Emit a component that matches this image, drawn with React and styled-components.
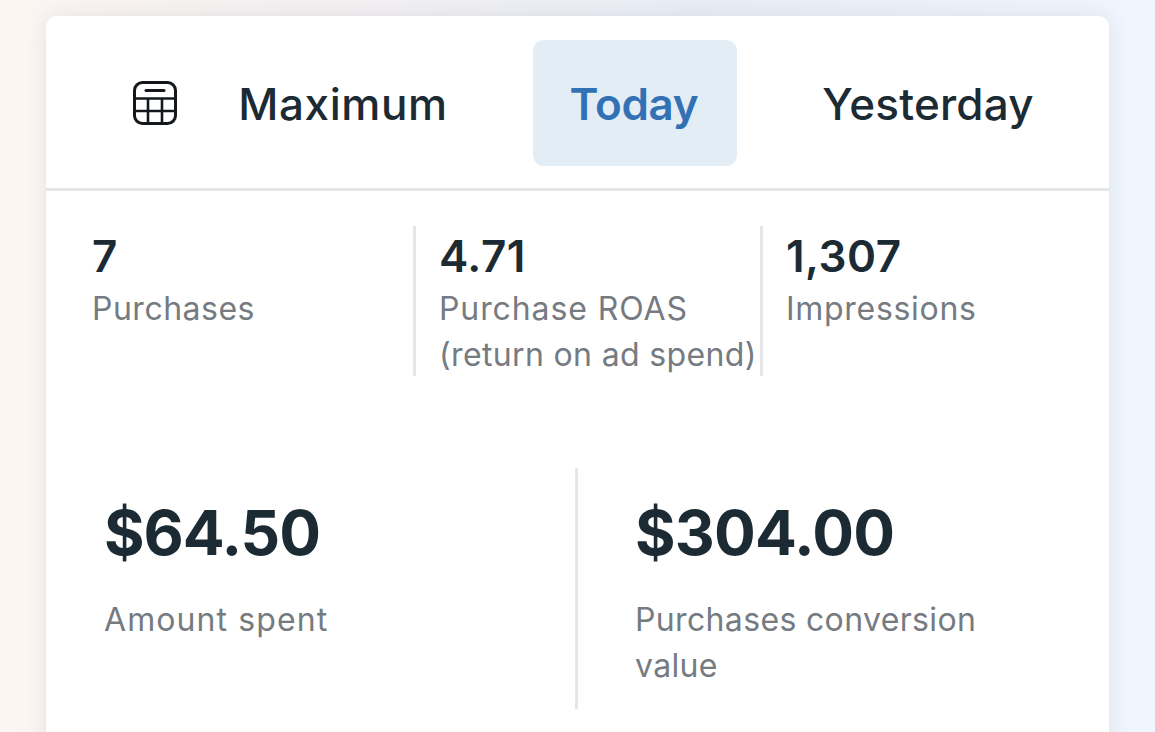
import React from "react";
import styled, { createGlobalStyle } from "styled-components";

const Global = createGlobalStyle`
  html, body { margin: 0; padding: 0; height: 100%; overflow: hidden; }
  #root { height: 100%; }
  * { box-sizing: border-box; }
`;

const Page = styled.div`
  width: 1155px;
  height: 732px;
  overflow: hidden;
  padding: 16px 46px 0;
  font-family: Inter, "Noto Sans", sans-serif;
  background: linear-gradient(90deg, #fbf6f2 0%, #f5f1f2 25%, #e9eef6 60%, #f0f6fd 100%);
`;

const Card = styled.main`
  width: 1063px;
  height: 740px;
  background: #fff;
  border-radius: 11px;
  box-shadow: 0 0 22px rgba(40, 40, 60, 0.09);
`;

const TabBar = styled.nav`
  height: 175px;
  border-bottom: 3px solid #e4e6ea;
  display: flex;
  align-items: flex-start;
  padding: 24px 0 0 87px;
`;

const IconSlot = styled.span`
  width: 44px;
  height: 126px;
  display: flex;
  align-items: center;
  color: #14181c;
`;

const Tab = styled.div`
  height: 126px;
  width: ${(p) => p.$w}px;
  margin-left: ${(p) => p.$ml}px;
  padding: 2px ${(p) => (p.$active ? 2 : 0)}px 0 0;
  display: flex;
  align-items: center;
  justify-content: center;
  border-radius: 11px;
  font-size: 44px;
  letter-spacing: ${(p) => p.$track}px;
  white-space: nowrap;
  font-weight: ${(p) => (p.$active ? 600 : 500)};
  color: ${(p) => (p.$active ? "#3371b5" : "#1c2b33")};
  background: ${(p) => (p.$active ? "#e3edf6" : "transparent")};
`;

const StatsRow = styled.section`
  display: grid;
  grid-template-columns: 347px 347px 1fr;
  margin: 35px 0 0 20px;
  height: 150px;
`;

const Stat = styled.div`
  padding-left: ${(p) => (p.$rule ? 23 : 26)}px;
  border-left: ${(p) => (p.$rule ? "3px solid #e4e6ea" : "none")};
  height: 150px;
`;

const StatValue = styled.div`
  font-size: 44px;
  font-weight: 600;
  line-height: 60px;
  letter-spacing: 0.5px;
  color: #1c2b33;
`;

const Label = styled.div`
  font-size: 32px;
  line-height: 46px;
  letter-spacing: ${(p) => p.$track}px;
  color: #757b81;
  white-space: nowrap;
`;

const TotalsRow = styled.section`
  display: grid;
  grid-template-columns: 529px 1fr;
  margin: 92px 0 0;
`;

const Total = styled.div`
  height: 241px;
  padding: 25px 0 0 ${(p) => (p.$rule ? 57 : 58)}px;
  border-left: ${(p) => (p.$rule ? "3px solid #e4e6ea" : "none")};
`;

const TotalValue = styled.div`
  font-size: 62px;
  line-height: 80px;
  font-weight: 700;
  letter-spacing: ${(p) => p.$track}px;
  color: #1c2b33;
  margin-bottom: 24px;
`;

const CalendarIcon = () => (
  <svg width="44" height="44" viewBox="0 0 44 44" fill="none" stroke="currentColor" strokeWidth="3">
    <rect x="1.5" y="1.5" width="41" height="41" rx="8" />
    <path d="M13 9.5h18" strokeLinecap="round" />
    <path d="M1.5 17.5h41M1.5 30h41M15 17.5v25M29 17.5v25" strokeWidth="2.6" />
  </svg>
);

export default function App() {
  return (
    <Page>
      <Global />
      <Card>
        <TabBar>
          <IconSlot><CalendarIcon /></IconSlot>
          <Tab $w={206} $ml={63} $track={0.6}>Maximum</Tab>
          <Tab $active $w={204} $ml={87} $track={-0.3}>Today</Tab>
          <Tab $w={210} $ml={86} $track={0.2}>Yesterday</Tab>
        </TabBar>
        <StatsRow>
          <Stat>
            <StatValue>7</StatValue>
            <Label $track={0.5}>Purchases</Label>
          </Stat>
          <Stat $rule>
            <StatValue>4.71</StatValue>
            <Label $track={0.9}>Purchase ROAS</Label>
            <Label $track={0.35}>(return on ad spend)</Label>
          </Stat>
          <Stat $rule>
            <StatValue>1,307</StatValue>
            <Label $track={0.7}>Impressions</Label>
          </Stat>
        </StatsRow>
        <TotalsRow>
          <Total>
            <TotalValue $track={-1.1}>$64.50</TotalValue>
            <Label $track={1.1}>Amount spent</Label>
          </Total>
          <Total $rule>
            <TotalValue $track={-0.8}>$304.00</TotalValue>
            <Label $track={0.35}>Purchases conversion</Label>
            <Label $track={0.35}>value</Label>
          </Total>
        </TotalsRow>
      </Card>
    </Page>
  );
}
